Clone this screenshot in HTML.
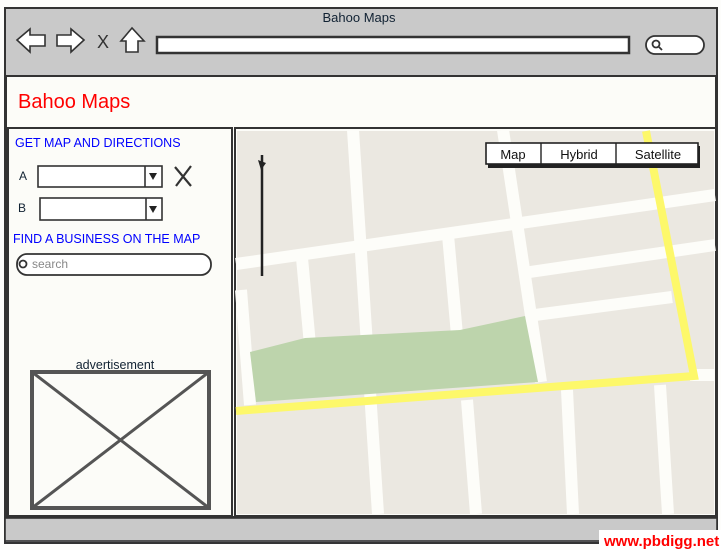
<!DOCTYPE html>
<html><head><meta charset="utf-8"><style>
html,body{margin:0;padding:0;background:#fff;}
svg{display:block;}
text{font-family:"Liberation Sans","DejaVu Sans",sans-serif;}
</style></head><body>
<svg width="721" height="550" viewBox="0 0 721 550" xmlns="http://www.w3.org/2000/svg">
<rect width="721" height="550" fill="#fdfdfb"/>
<!-- browser frame -->
<rect x="5" y="8" width="712" height="535" fill="#c9c9c9" stroke="#333" stroke-width="2"/>
<rect x="6" y="76" width="710" height="441" fill="#fcfcf8" stroke="#333" stroke-width="2"/>
<text x="359" y="22" font-size="13" fill="#123" text-anchor="middle">Bahoo Maps</text>
<!-- nav icons -->
<path d="M17 40 L30 29 L30 35 L45 35 L45 46 L30 46 L30 52 Z" fill="#fff" stroke="#333" stroke-width="1.6"/>
<path d="M84 40 L71 29 L71 35 L57 35 L57 46 L71 46 L71 52 Z" fill="#fff" stroke="#333" stroke-width="1.6"/>
<text x="97" y="48" font-size="18" fill="#333">X</text>
<path d="M132 28 L121 41 L126 41 L126 52 L138 52 L138 41 L144 41 Z" fill="#fff" stroke="#333" stroke-width="1.6"/>
<rect x="157" y="37" width="472" height="16" fill="#fff" stroke="#333" stroke-width="2.5"/>
<rect x="646" y="36" width="58" height="18" rx="9" fill="#fff" stroke="#333" stroke-width="1.8"/>
<circle cx="656" cy="44" r="3.5" fill="none" stroke="#333" stroke-width="1.8"/>
<line x1="659" y1="47" x2="662" y2="50" stroke="#333" stroke-width="1.8"/>
<text x="18" y="108" font-size="20" fill="#f00">Bahoo Maps</text>
<!-- left panel -->
<rect x="8" y="128" width="224" height="388" fill="#fcfcf8" stroke="#333" stroke-width="2"/>
<text x="15" y="147" font-size="12.5" fill="#00f">GET MAP AND DIRECTIONS</text>
<text x="19" y="180" font-size="12" fill="#123">A</text>
<text x="18" y="212" font-size="12" fill="#123">B</text>
<rect x="38" y="166" width="124" height="21" fill="#fff" stroke="#333" stroke-width="1.6"/>
<line x1="145" y1="166" x2="145" y2="187" stroke="#333" stroke-width="1.6"/>
<path d="M149 173 L157 173 L153 180 Z" fill="#222"/>
<rect x="40" y="198" width="122" height="22" fill="#fff" stroke="#333" stroke-width="1.6"/>
<line x1="146" y1="198" x2="146" y2="220" stroke="#333" stroke-width="1.6"/>
<path d="M149 206 L157 206 L153 213 Z" fill="#222"/>
<path d="M175 167 L191 186 M191 166 L176 186" stroke="#333" stroke-width="2.2" fill="none"/>
<text x="13" y="243" font-size="12.5" fill="#00f">FIND A BUSINESS ON THE MAP</text>
<rect x="17" y="254" width="194" height="21" rx="10" fill="#fff" stroke="#333" stroke-width="1.8"/>
<circle cx="23" cy="264" r="3.5" fill="none" stroke="#333" stroke-width="1.8"/>
<text x="32" y="268" font-size="12" fill="#888">search</text>
<text x="115" y="369" font-size="12.5" fill="#123" text-anchor="middle">advertisement</text>
<rect x="32" y="372" width="177" height="136" fill="none" stroke="#555" stroke-width="4"/>
<path d="M32 372 L209 508 M209 372 L32 508" stroke="#555" stroke-width="3"/>
<!-- map -->
<rect x="235" y="128" width="481" height="388" fill="#fcfcf8" stroke="#333" stroke-width="2"/>
<rect x="237" y="131" width="477" height="383" fill="#ebe8e1"/>
<g stroke="#fdfdf9" stroke-width="12" fill="none">
<line x1="353" y1="130" x2="378" y2="514"/>
<line x1="503" y1="130" x2="541" y2="382"/>
<line x1="236" y1="264" x2="715" y2="195"/>
<line x1="530" y1="272" x2="715" y2="245"/>
<line x1="535" y1="315" x2="672" y2="297"/>
<line x1="690" y1="375" x2="715" y2="375"/>
<line x1="302" y1="258" x2="310" y2="345"/>
<line x1="448" y1="235" x2="457" y2="335"/>
<line x1="241" y1="290" x2="250" y2="405"/>
<line x1="467" y1="400" x2="476" y2="514"/>
<line x1="567" y1="390" x2="573" y2="514"/>
<line x1="660" y1="385" x2="668" y2="514"/>
</g>
<path d="M250 352 L305 338 L460 330 L525 316 L538 382 L256 402 Z" fill="#bdd4ac"/>
<path d="M236 411 L694 376 L646 131" stroke="#fdf86a" stroke-width="8" fill="none"/>
<line x1="262" y1="155" x2="262" y2="276" stroke="#222" stroke-width="2.5"/>
<path d="M258 160 L266 163 L261 170 Z" fill="#222"/>
<!-- map type buttons -->
<rect x="488" y="146" width="212" height="22" fill="#222"/>
<rect x="486" y="143" width="212" height="21" fill="#fff" stroke="#222" stroke-width="1.6"/>
<line x1="541" y1="143" x2="541" y2="164" stroke="#222" stroke-width="1.4"/>
<line x1="616" y1="143" x2="616" y2="164" stroke="#222" stroke-width="1.4"/>
<text x="513" y="159" font-size="13" fill="#111" text-anchor="middle">Map</text>
<text x="579" y="159" font-size="13" fill="#111" text-anchor="middle">Hybrid</text>
<text x="658" y="159" font-size="13" fill="#111" text-anchor="middle">Satellite</text>
<!-- status bar -->
<rect x="5" y="518" width="712" height="23" fill="#c9c9c9" stroke="#333" stroke-width="1.6"/>
<rect x="599" y="530" width="122" height="20" fill="#fff"/>
<text x="604" y="546" font-size="15" font-weight="bold" fill="#f00">www.pbdigg.net</text>
</svg>
</body></html>
